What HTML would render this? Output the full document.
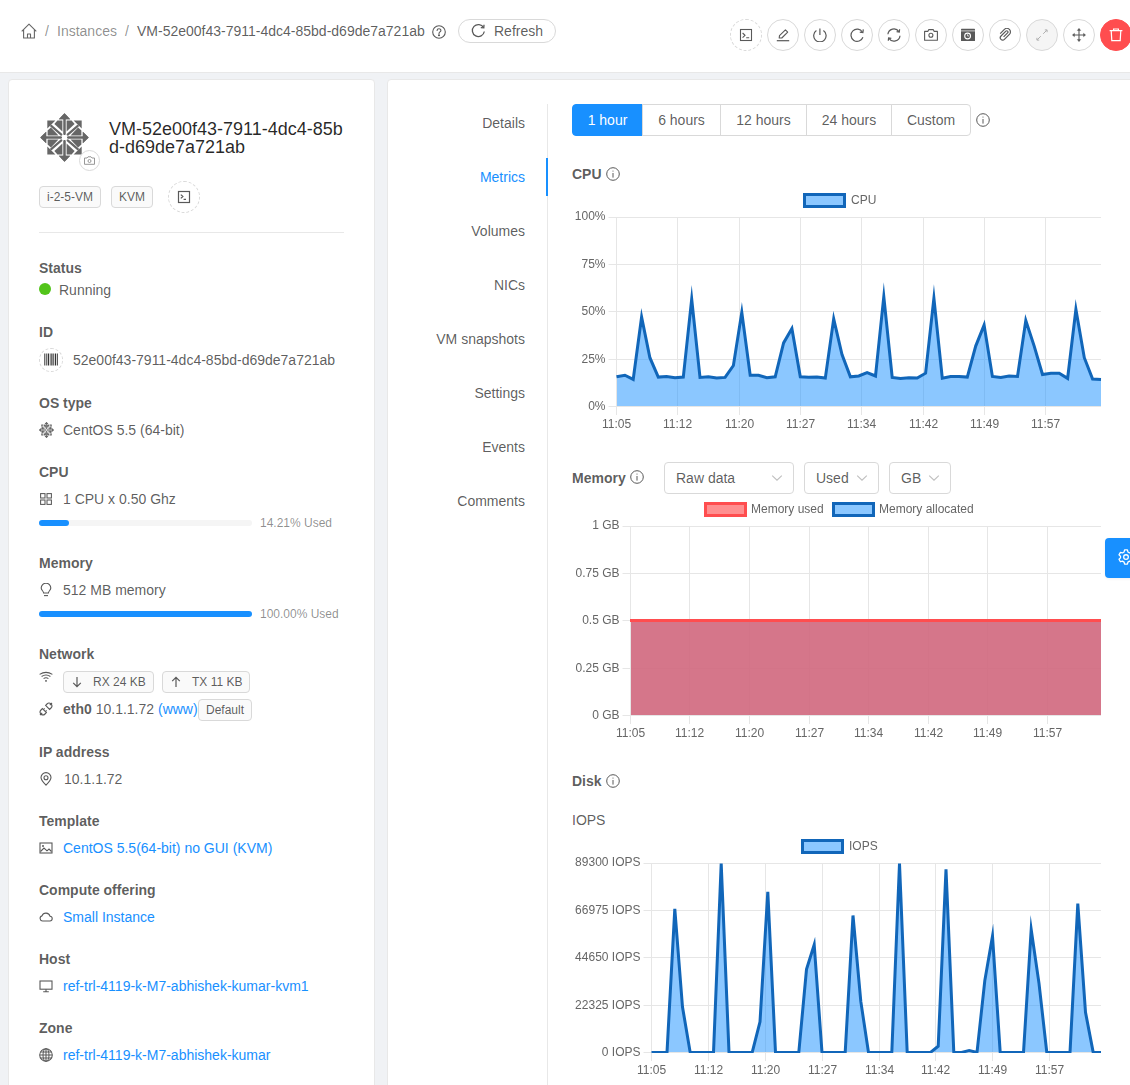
<!DOCTYPE html>
<html><head><meta charset="utf-8">
<style>
*{box-sizing:border-box;margin:0;padding:0}
html,body{width:1130px;height:1085px;overflow:hidden;background:#f0f2f5;font-family:"Liberation Sans",sans-serif;font-size:14px;color:rgba(0,0,0,0.65)}
.abs{position:absolute}
.t{position:absolute;white-space:nowrap;line-height:16px;font-size:14px}
.s{position:absolute;white-space:nowrap;line-height:14px;font-size:12px}
.b{font-weight:bold}
.lnk{color:#1890ff}
#hdr{position:absolute;left:0;top:0;width:1130px;height:73px;background:#fff;border-bottom:1px solid #e8e8e8}
.card{position:absolute;background:#fff;border:1px solid #e8e8e8;border-radius:4px}
.cb{position:absolute;width:32px;height:32px;border-radius:50%;border:1px solid #d9d9d9;background:#fff}
.cb svg{position:absolute;left:8px;top:8px}
.tag{position:absolute;height:22px;border:1px solid #d9d9d9;background:#fafafa;border-radius:4px;font-size:12px;line-height:20px;padding:0 7px;white-space:nowrap}
.ic{position:absolute}
.tab{position:absolute;right:0;white-space:nowrap;line-height:16px;font-size:14px;text-align:right}
.bg{position:absolute;height:32px;border:1px solid #d9d9d9;background:#fff;line-height:30px;text-align:center;white-space:nowrap}
.sel{position:absolute;height:32px;border:1px solid #d9d9d9;background:#fff;border-radius:4px;line-height:30px;padding-left:11px;white-space:nowrap}
.sel svg{position:absolute;top:11px}
</style></head><body>
<div id="hdr"></div>
<div class="card" style="left:8px;top:79px;width:367px;height:1100px"></div>
<div class="card" style="left:387px;top:79px;width:800px;height:1100px"></div>

<svg class="ic" style="left:21px;top:23px" width="16" height="16" viewBox="0 0 16 16" fill="none" stroke="#666" stroke-width="1.1" stroke-linejoin="round"><path d="M0.7 8.4 L8 1.2 L15.3 8.4 M2.6 6.6 V15 H13.4 V6.6 M6.5 15 V11 H9.5 V15"/></svg>
<div class="t" style="left:45px;top:23px;color:rgba(0,0,0,0.45)">/</div>
<div class="t" style="left:57px;top:23px;color:rgba(0,0,0,0.45)">Instances</div>
<div class="t" style="left:125px;top:23px;color:rgba(0,0,0,0.45)">/</div>
<div class="t" style="left:137px;top:23px">VM-52e00f43-7911-4dc4-85bd-d69de7a721ab</div>
<svg class="ic" style="left:432px;top:25px" width="14" height="14" viewBox="0 0 14 14" fill="none" stroke="#595959" stroke-width="1.1"><circle cx="7" cy="7" r="6.3"/><path d="M5.1 5.4 C5.1 3.2 8.9 3.2 8.9 5.4 C8.9 6.9 7 6.9 7 8.4" stroke-linecap="round"/><circle cx="7" cy="10.3" r="0.5" fill="#595959"/></svg>
<div class="abs" style="left:458px;top:19px;width:98px;height:24px;border:1px solid #d9d9d9;border-radius:12px;background:#fff"></div>
<svg class="ic" style="left:471px;top:23px" width="15" height="15" viewBox="0 0 15 15" fill="none" stroke="#595959" stroke-width="1.3"><path d="M12.6 4.6 A6 6 0 1 0 13.3 8.5"/><path d="M13 1.8 L12.8 4.9 L9.8 4.6" fill="none"/></svg>
<div class="t" style="left:494px;top:23px">Refresh</div>

<div class="cb" style="left:730px;top:19px;border-style:dashed"><svg width="14" height="14" viewBox="0 0 14 14" fill="none" stroke="#595959" stroke-width="1.1"><rect x="1.5" y="1.5" width="11" height="11"/><path d="M3.6 5 L6 7.3 L3.6 9.6 M7.2 9.8 H10.2"/></svg></div>
<div class="cb" style="left:767px;top:19px"><svg width="14" height="14" viewBox="0 0 14 14" fill="none" stroke="#595959" stroke-width="1.1"><path d="M0.8 12.7 H13.2" stroke-width="1.2"/><path d="M3.2 10 L3.5 7.6 L9.4 1.8 L11.7 4.1 L5.8 10 Z" stroke-linejoin="round"/></svg></div>
<div class="cb" style="left:804px;top:19px"><svg width="14" height="14" viewBox="0 0 14 14" fill="none" stroke="#595959" stroke-width="1.2"><path d="M10.4 2.6 A6.2 6.2 0 1 1 3.4 2.6"/><path d="M6.9 0.4 V7"/></svg></div>
<div class="cb" style="left:841px;top:19px"><svg width="14" height="14" viewBox="0 0 14 14" fill="none" stroke="#595959" stroke-width="1.2"><path d="M12.4 4.2 A6.1 6.1 0 1 0 12.9 9.2"/><path d="M13.3 1.4 L12.9 4.6 L9.8 4.1"/></svg></div>
<div class="cb" style="left:878px;top:19px"><svg width="14" height="14" viewBox="0 0 14 14" fill="none" stroke="#595959" stroke-width="1.2"><path d="M0.9 6.3 A6 6 0 0 1 11.9 3.6"/><path d="M13 7.7 A6 6 0 0 1 2 10.4"/><path d="M12.6 1.2 L12.3 4.1 L9.6 3.6 M1.3 12.8 L1.6 9.9 L4.3 10.4"/></svg></div>
<div class="cb" style="left:915px;top:19px"><svg width="14" height="14" viewBox="0 0 14 14" fill="none" stroke="#595959" stroke-width="1.1"><path d="M0.6 3.4 H3.8 L4.8 1.6 H9.2 L10.2 3.4 H13.4 V12.2 H0.6 Z" stroke-linejoin="round"/><circle cx="6.9" cy="7.3" r="2"/></svg></div>
<div class="cb" style="left:952px;top:19px"><svg width="14" height="14" viewBox="0 0 14 14"><rect x="0" y="0.8" width="14" height="12.2" rx="0.6" fill="#595959"/><path d="M0 2.9 H14" stroke="#fff" stroke-width="0.7"/><circle cx="6.6" cy="8" r="2.9" fill="none" stroke="#fff" stroke-width="1.1"/><path d="M6.6 6.2 V8 H8" stroke="#fff" stroke-width="0.7" fill="none"/></svg></div>
<div class="cb" style="left:989px;top:19px"><svg width="14" height="14" viewBox="0 0 14 14" fill="none" stroke="#595959" stroke-width="1.2"><path d="M5.6 8.8 L9.6 4.8 A1.2 1.2 0 0 0 7.9 3.1 L3 8 A2.4 2.4 0 0 0 6.4 11.4 L11.4 6.4 A3.5 3.5 0 0 0 6.4 1.4 L2.2 5.6"/></svg></div>
<div class="cb" style="left:1026px;top:19px;background:#f5f5f5"><svg width="14" height="14" viewBox="0 0 14 14" fill="none" stroke="#b0b0b0" stroke-width="1"><path d="M8.2 5.8 L11.8 2.2 M9.8 1.9 H12.1 V4.2 M5.8 8.2 L2.2 11.8 M1.9 9.8 V12.1 H4.2"/></svg></div>
<div class="cb" style="left:1063px;top:19px"><svg width="14" height="14" viewBox="0 0 14 14" fill="none" stroke="#595959" stroke-width="1.1"><path d="M7 0.8 V13.2 M0.8 7 H13.2"/><path d="M5.4 2.4 L7 0.6 L8.6 2.4 Z M5.4 11.6 L7 13.4 L8.6 11.6 Z M2.4 5.4 L0.6 7 L2.4 8.6 Z M11.6 5.4 L13.4 7 L11.6 8.6 Z" fill="#595959" stroke-width="0.6"/></svg></div>
<div class="cb" style="left:1100px;top:19px;background:#ff4d4f;border-color:#ff4d4f"><svg width="14" height="14" viewBox="0 0 14 14" fill="none" stroke="#fff" stroke-width="1.2"><path d="M0.6 2.6 H13.4 M4.6 2.6 V1 H9.4 V2.6 M2.2 2.6 L2.8 12.6 H11.2 L11.8 2.6"/></svg></div>

<!-- CentOS logo -->
<svg class="ic" style="left:40px;top:113px" width="49" height="49" viewBox="-24.5 -24.5 49 49" ><g fill="#666"><g>
  <polygon points="-17.2,-17.1 -9.1,-17.1 -17.2,-8.9"/>
  <polygon points="-7.1,-16.9 -2.1,-16.9 -2.1,-6.0 -10.1,-13.6"/>
  <polygon points="-16.9,-7.1 -16.9,-2.1 -6.0,-2.1 -13.6,-10.1"/>
  <path d="M-13.3 -11.6 L-3.2 -2.9" stroke="#666" stroke-width="2.2" stroke-linecap="round" fill="none"/>
  <path d="M-11.6 -13.3 L-2.9 -3.2" stroke="#666" stroke-width="0" fill="none"/>
  <path d="M0 -18.2 V-3.6 M-18.2 0 H-3.6" stroke="#666" stroke-width="2" stroke-linecap="round" fill="none"/>
  <polygon points="0,-24.2 -5.7,-18.3 5.7,-18.3"/>
  <polygon points="-24.2,0 -18.3,-5.7 -18.3,5.7"/>
 </g><g transform="scale(-1,1)">
  <polygon points="-17.2,-17.1 -9.1,-17.1 -17.2,-8.9"/>
  <polygon points="-7.1,-16.9 -2.1,-16.9 -2.1,-6.0 -10.1,-13.6"/>
  <polygon points="-16.9,-7.1 -16.9,-2.1 -6.0,-2.1 -13.6,-10.1"/>
  <path d="M-13.3 -11.6 L-3.2 -2.9" stroke="#666" stroke-width="2.2" stroke-linecap="round" fill="none"/>
  <path d="M-11.6 -13.3 L-2.9 -3.2" stroke="#666" stroke-width="0" fill="none"/>
  <path d="M0 -18.2 V-3.6 M-18.2 0 H-3.6" stroke="#666" stroke-width="2" stroke-linecap="round" fill="none"/>
  <polygon points="0,-24.2 -5.7,-18.3 5.7,-18.3"/>
  <polygon points="-24.2,0 -18.3,-5.7 -18.3,5.7"/>
 </g><g transform="scale(1,-1)">
  <polygon points="-17.2,-17.1 -9.1,-17.1 -17.2,-8.9"/>
  <polygon points="-7.1,-16.9 -2.1,-16.9 -2.1,-6.0 -10.1,-13.6"/>
  <polygon points="-16.9,-7.1 -16.9,-2.1 -6.0,-2.1 -13.6,-10.1"/>
  <path d="M-13.3 -11.6 L-3.2 -2.9" stroke="#666" stroke-width="2.2" stroke-linecap="round" fill="none"/>
  <path d="M-11.6 -13.3 L-2.9 -3.2" stroke="#666" stroke-width="0" fill="none"/>
  <path d="M0 -18.2 V-3.6 M-18.2 0 H-3.6" stroke="#666" stroke-width="2" stroke-linecap="round" fill="none"/>
  <polygon points="0,-24.2 -5.7,-18.3 5.7,-18.3"/>
  <polygon points="-24.2,0 -18.3,-5.7 -18.3,5.7"/>
 </g><g transform="scale(-1,-1)">
  <polygon points="-17.2,-17.1 -9.1,-17.1 -17.2,-8.9"/>
  <polygon points="-7.1,-16.9 -2.1,-16.9 -2.1,-6.0 -10.1,-13.6"/>
  <polygon points="-16.9,-7.1 -16.9,-2.1 -6.0,-2.1 -13.6,-10.1"/>
  <path d="M-13.3 -11.6 L-3.2 -2.9" stroke="#666" stroke-width="2.2" stroke-linecap="round" fill="none"/>
  <path d="M-11.6 -13.3 L-2.9 -3.2" stroke="#666" stroke-width="0" fill="none"/>
  <path d="M0 -18.2 V-3.6 M-18.2 0 H-3.6" stroke="#666" stroke-width="2" stroke-linecap="round" fill="none"/>
  <polygon points="0,-24.2 -5.7,-18.3 5.7,-18.3"/>
  <polygon points="-24.2,0 -18.3,-5.7 -18.3,5.7"/>
 </g></g></svg>
<div class="abs" style="left:79px;top:150px;width:21px;height:21px;border-radius:50%;border:1px solid #d9d9d9;background:#fff"></div>
<svg class="ic" style="left:83px;top:154px" width="13" height="13" viewBox="0 0 13 13" fill="none" stroke="#8c8c8c" stroke-width="0.9"><path d="M1.5 4 H4 L5 2.8 H8 L9 4 H11.5 V10.3 H1.5 Z"/><circle cx="6.5" cy="7" r="1.5"/></svg>
<div class="abs" style="left:109px;top:120px;font-size:18px;line-height:18px;color:rgba(0,0,0,0.85);white-space:nowrap">VM-52e00f43-7911-4dc4-85b<br>d-d69de7a721ab</div>

<div class="tag" style="left:39px;top:186px">i-2-5-VM</div>
<div class="tag" style="left:111px;top:186px">KVM</div>
<div class="abs" style="left:168px;top:181px;width:32px;height:32px;border-radius:50%;border:1px dashed #d9d9d9"></div>
<svg class="ic" style="left:177px;top:190px" width="14" height="14" viewBox="0 0 14 14" fill="none" stroke="#595959" stroke-width="1.2"><rect x="1.5" y="1.5" width="11" height="11"/><path d="M3.8 4.6 L5.9 6.5 L3.8 8.4 M6.6 9.4 H9"/></svg>
<div class="abs" style="left:39px;top:232px;width:305px;height:1px;background:#e8e8e8"></div>

<div class="t b" style="left:39px;top:260px">Status</div>
<div class="abs" style="left:39px;top:283px;width:12px;height:12px;border-radius:50%;background:#52c41a"></div>
<div class="t" style="left:59px;top:282px">Running</div>

<div class="t b" style="left:39px;top:324px">ID</div>
<div class="abs" style="left:39px;top:348px;width:24px;height:24px;border-radius:50%;border:1px dashed #d9d9d9"></div>
<svg class="ic" style="left:44px;top:353px" width="14" height="13" viewBox="0 0 14 13" fill="#333"><rect x="0.3" y="0.5" width="1" height="12"/><rect x="2.2" y="0.5" width="0.7" height="12"/><rect x="3.7" y="0.5" width="1.3" height="12"/><rect x="5.8" y="0.5" width="0.7" height="12"/><rect x="7.3" y="0.5" width="1.2" height="12"/><rect x="9.3" y="0.5" width="0.7" height="12"/><rect x="10.8" y="0.5" width="1.4" height="12"/><rect x="13" y="0.5" width="0.8" height="12"/></svg>
<div class="t" style="left:73px;top:352px">52e00f43-7911-4dc4-85bd-d69de7a721ab</div>

<div class="t b" style="left:39px;top:395px">OS type</div>
<svg class="ic" style="left:39px;top:422px" width="15" height="16" viewBox="-24.5 -24.5 49 49" preserveAspectRatio="none"><g fill="#666"><g>
  <polygon points="-17.2,-17.1 -9.1,-17.1 -17.2,-8.9"/>
  <polygon points="-7.1,-16.9 -2.1,-16.9 -2.1,-6.0 -10.1,-13.6"/>
  <polygon points="-16.9,-7.1 -16.9,-2.1 -6.0,-2.1 -13.6,-10.1"/>
  <path d="M-13.3 -11.6 L-3.2 -2.9" stroke="#666" stroke-width="2.2" stroke-linecap="round" fill="none"/>
  <path d="M-11.6 -13.3 L-2.9 -3.2" stroke="#666" stroke-width="0" fill="none"/>
  <path d="M0 -18.2 V-3.6 M-18.2 0 H-3.6" stroke="#666" stroke-width="2" stroke-linecap="round" fill="none"/>
  <polygon points="0,-24.2 -5.7,-18.3 5.7,-18.3"/>
  <polygon points="-24.2,0 -18.3,-5.7 -18.3,5.7"/>
 </g><g transform="scale(-1,1)">
  <polygon points="-17.2,-17.1 -9.1,-17.1 -17.2,-8.9"/>
  <polygon points="-7.1,-16.9 -2.1,-16.9 -2.1,-6.0 -10.1,-13.6"/>
  <polygon points="-16.9,-7.1 -16.9,-2.1 -6.0,-2.1 -13.6,-10.1"/>
  <path d="M-13.3 -11.6 L-3.2 -2.9" stroke="#666" stroke-width="2.2" stroke-linecap="round" fill="none"/>
  <path d="M-11.6 -13.3 L-2.9 -3.2" stroke="#666" stroke-width="0" fill="none"/>
  <path d="M0 -18.2 V-3.6 M-18.2 0 H-3.6" stroke="#666" stroke-width="2" stroke-linecap="round" fill="none"/>
  <polygon points="0,-24.2 -5.7,-18.3 5.7,-18.3"/>
  <polygon points="-24.2,0 -18.3,-5.7 -18.3,5.7"/>
 </g><g transform="scale(1,-1)">
  <polygon points="-17.2,-17.1 -9.1,-17.1 -17.2,-8.9"/>
  <polygon points="-7.1,-16.9 -2.1,-16.9 -2.1,-6.0 -10.1,-13.6"/>
  <polygon points="-16.9,-7.1 -16.9,-2.1 -6.0,-2.1 -13.6,-10.1"/>
  <path d="M-13.3 -11.6 L-3.2 -2.9" stroke="#666" stroke-width="2.2" stroke-linecap="round" fill="none"/>
  <path d="M-11.6 -13.3 L-2.9 -3.2" stroke="#666" stroke-width="0" fill="none"/>
  <path d="M0 -18.2 V-3.6 M-18.2 0 H-3.6" stroke="#666" stroke-width="2" stroke-linecap="round" fill="none"/>
  <polygon points="0,-24.2 -5.7,-18.3 5.7,-18.3"/>
  <polygon points="-24.2,0 -18.3,-5.7 -18.3,5.7"/>
 </g><g transform="scale(-1,-1)">
  <polygon points="-17.2,-17.1 -9.1,-17.1 -17.2,-8.9"/>
  <polygon points="-7.1,-16.9 -2.1,-16.9 -2.1,-6.0 -10.1,-13.6"/>
  <polygon points="-16.9,-7.1 -16.9,-2.1 -6.0,-2.1 -13.6,-10.1"/>
  <path d="M-13.3 -11.6 L-3.2 -2.9" stroke="#666" stroke-width="2.2" stroke-linecap="round" fill="none"/>
  <path d="M-11.6 -13.3 L-2.9 -3.2" stroke="#666" stroke-width="0" fill="none"/>
  <path d="M0 -18.2 V-3.6 M-18.2 0 H-3.6" stroke="#666" stroke-width="2" stroke-linecap="round" fill="none"/>
  <polygon points="0,-24.2 -5.7,-18.3 5.7,-18.3"/>
  <polygon points="-24.2,0 -18.3,-5.7 -18.3,5.7"/>
 </g></g></svg>
<div class="t" style="left:63px;top:422px">CentOS 5.5 (64-bit)</div>

<div class="t b" style="left:39px;top:464px">CPU</div>
<svg class="ic" style="left:40px;top:493px" width="12" height="12" viewBox="0 0 12 12" fill="none" stroke="#595959" stroke-width="1.05"><rect x="0.6" y="0.6" width="4.4" height="4.4"/><rect x="7" y="0.6" width="4.4" height="4.4"/><rect x="0.6" y="7" width="4.4" height="4.4"/><rect x="7" y="7" width="4.4" height="4.4"/></svg>
<div class="t" style="left:63px;top:491px">1 CPU x 0.50 Ghz</div>
<div class="abs" style="left:39px;top:520px;width:213px;height:6px;border-radius:3px;background:#f5f5f5"></div>
<div class="abs" style="left:39px;top:520px;width:30px;height:6px;border-radius:3px;background:#1890ff"></div>
<div class="s" style="left:260px;top:516px;color:rgba(0,0,0,0.45)">14.21% Used</div>

<div class="t b" style="left:39px;top:555px">Memory</div>
<svg class="ic" style="left:39px;top:583px" width="14" height="14" viewBox="0 0 14 14" fill="none" stroke="#595959" stroke-width="1.1"><path d="M4.6 10 C4.6 8 2.2 7.4 2.2 5 A4.8 4.8 0 0 1 11.8 5 C11.8 7.4 9.4 8 9.4 10 Z"/><path d="M5 12.6 H9"/></svg>
<div class="t" style="left:63px;top:582px">512 MB memory</div>
<div class="abs" style="left:39px;top:611px;width:213px;height:6px;border-radius:3px;background:#1890ff"></div>
<div class="s" style="left:260px;top:607px;color:rgba(0,0,0,0.45)">100.00% Used</div>

<div class="t b" style="left:39px;top:646px">Network</div>
<svg class="ic" style="left:39px;top:671px" width="14" height="11" viewBox="0 0 14 11" fill="none" stroke="#595959" stroke-width="1"><path stroke-width="1.1" d="M0.6 3.4 Q7 -0.6 13.4 3.4 M2.6 5.5 Q7 2.6 11.4 5.5 M4.6 7.6 Q7 5.8 9.4 7.6"/><rect x="6.2" y="9.1" width="1.6" height="1.6" fill="#595959" stroke="none"/></svg>
<div class="tag" style="left:63px;top:671px;width:91px;font-size:12px"></div>
<svg class="ic" style="left:72px;top:676px" width="10" height="12" viewBox="0 0 10 12" fill="none" stroke="#595959" stroke-width="1.2"><path d="M5 1 V10.5 M1.2 6.8 L5 10.6 L8.8 6.8"/></svg>
<div class="s" style="left:93px;top:675px">RX 24 KB</div>
<div class="tag" style="left:162px;top:671px;width:88px"></div>
<svg class="ic" style="left:171px;top:676px" width="10" height="12" viewBox="0 0 10 12" fill="none" stroke="#595959" stroke-width="1.2"><path d="M5 11 V1.5 M1.2 5.2 L5 1.4 L8.8 5.2"/></svg>
<div class="s" style="left:192px;top:675px">TX 11 KB</div>
<svg class="ic" style="left:39px;top:702px" width="14" height="14" viewBox="0 0 14 14" fill="none" stroke="#595959" stroke-width="1.1"><path d="M1 13 L3.2 10.8 M13 1 L10.8 3.2"/><path d="M3.4 6.6 L7.4 10.6 L6 12 A2.4 2.4 0 0 1 2 8 Z"/><path d="M6.6 3.4 L10.6 7.4 L12 6 A2.4 2.4 0 0 0 8 2 Z"/><path d="M5.6 6.4 L4.4 7.6 M7.6 8.4 L6.4 9.6"/></svg>
<div class="t" style="left:63px;top:701px"><span class="b" style="color:rgba(0,0,0,0.65)">eth0</span> 10.1.1.72 <span class="lnk">(www)</span></div>
<div class="tag" style="left:198px;top:699px;height:22px;line-height:20px">Default</div>

<div class="t b" style="left:39px;top:744px">IP address</div>
<svg class="ic" style="left:39px;top:772px" width="14" height="14" viewBox="0 0 14 14" fill="none" stroke="#595959" stroke-width="1.1"><path d="M7 13.2 C4 10.2 2 7.8 2 5.6 A5 5 0 0 1 12 5.6 C12 7.8 10 10.2 7 13.2 Z"/><circle cx="7" cy="5.8" r="2"/></svg>
<div class="t" style="left:64px;top:771px">10.1.1.72</div>

<div class="t b" style="left:39px;top:813px">Template</div>
<svg class="ic" style="left:39px;top:841px" width="14" height="14" viewBox="0 0 14 14" fill="none" stroke="#595959" stroke-width="1.1"><rect x="1" y="2" width="12" height="10"/><path d="M1.5 10.5 L5 7 L8 9.8 L10 8 L12.5 10.5"/><circle cx="4" cy="5" r="1" fill="#595959" stroke="none"/></svg>
<div class="t lnk" style="left:63px;top:840px">CentOS 5.5(64-bit) no GUI (KVM)</div>

<div class="t b" style="left:39px;top:882px">Compute offering</div>
<svg class="ic" style="left:39px;top:910px" width="14" height="14" viewBox="0 0 14 14" fill="none" stroke="#595959" stroke-width="1.1"><path d="M3.6 11 A2.6 2.6 0 0 1 3 5.9 A4.2 4.2 0 0 1 11 6.2 A2.4 2.4 0 0 1 10.6 11 Z"/></svg>
<div class="t lnk" style="left:63px;top:909px">Small Instance</div>

<div class="t b" style="left:39px;top:951px">Host</div>
<svg class="ic" style="left:39px;top:979px" width="14" height="14" viewBox="0 0 14 14" fill="none" stroke="#595959" stroke-width="1.1"><rect x="1" y="2" width="12" height="8.2"/><path d="M7 10.2 V12.6 M4.2 12.8 H9.8"/></svg>
<div class="t lnk" style="left:63px;top:978px">ref-trl-4119-k-M7-abhishek-kumar-kvm1</div>

<div class="t b" style="left:39px;top:1020px">Zone</div>
<svg class="ic" style="left:39px;top:1048px" width="14" height="14" viewBox="0 0 14 14" fill="none" stroke="#595959" stroke-width="1.05"><circle cx="7" cy="7" r="6.3"/><ellipse cx="7" cy="7" rx="3" ry="6.3"/><path d="M0.8 7 H13.2 M1.6 4 H12.4 M1.6 10 H12.4 M7 0.8 V13.2"/></svg>
<div class="t lnk" style="left:63px;top:1047px">ref-trl-4119-k-M7-abhishek-kumar</div>

<div class="abs" style="left:547px;top:104px;width:1px;height:1000px;background:#e8e8e8"></div>
<div class="abs" style="left:546px;top:158px;width:2px;height:38px;background:#1890ff"></div>
<div class="tab" style="left:0;width:525px;top:115px">Details</div>
<div class="tab" style="left:0;width:525px;top:169px;color:#1890ff">Metrics</div>
<div class="tab" style="left:0;width:525px;top:223px">Volumes</div>
<div class="tab" style="left:0;width:525px;top:277px">NICs</div>
<div class="tab" style="left:0;width:525px;top:331px">VM snapshots</div>
<div class="tab" style="left:0;width:525px;top:385px">Settings</div>
<div class="tab" style="left:0;width:525px;top:439px">Events</div>
<div class="tab" style="left:0;width:525px;top:493px">Comments</div>

<div class="bg" style="left:572px;top:104px;width:71px;background:#1890ff;border-color:#1890ff;color:#fff;border-radius:4px 0 0 4px">1 hour</div>
<div class="bg" style="left:642px;top:104px;width:79px;border-left:1px solid #d9d9d9">6 hours</div>
<div class="bg" style="left:720px;top:104px;width:87px">12 hours</div>
<div class="bg" style="left:806px;top:104px;width:86px">24 hours</div>
<div class="bg" style="left:891px;top:104px;width:80px;border-radius:0 4px 4px 0">Custom</div>
<svg class="ic" style="left:976px;top:113px" width="14" height="14" viewBox="0 0 14 14" fill="none" stroke="#595959" stroke-width="1"><circle cx="7" cy="7" r="6.3"/><path d="M7 6 V10.6"/><circle cx="7" cy="4" r="0.6" fill="#595959" stroke="none"/></svg>

<div class="t b" style="left:572px;top:166px">CPU</div>
<svg class="ic" style="left:606px;top:167px" width="14" height="14" viewBox="0 0 14 14" fill="none" stroke="#595959" stroke-width="1"><circle cx="7" cy="7" r="6.3"/><path d="M7 6 V10.6"/><circle cx="7" cy="4" r="0.6" fill="#595959" stroke="none"/></svg>
<div class="abs" style="left:803px;top:193px;width:43px;height:15px;background:rgba(24,144,255,0.5);border:3px solid #1166b9"></div>
<div class="s" style="left:851px;top:193px;color:#666;will-change:transform">CPU</div>

<div class="t b" style="left:572px;top:470px">Memory</div>
<svg class="ic" style="left:630px;top:470px" width="14" height="14" viewBox="0 0 14 14" fill="none" stroke="#595959" stroke-width="1"><circle cx="7" cy="7" r="6.3"/><path d="M7 6 V10.6"/><circle cx="7" cy="4" r="0.6" fill="#595959" stroke="none"/></svg>
<div class="sel" style="left:664px;top:462px;width:130px">Raw data<svg style="left:106px" width="12" height="8" viewBox="0 0 12 8" fill="none" stroke="#bfbfbf" stroke-width="1.1"><path d="M1.2 1.6 L6 6.2 L10.8 1.6"/></svg></div>
<div class="sel" style="left:804px;top:462px;width:75px">Used<svg style="left:51px" width="12" height="8" viewBox="0 0 12 8" fill="none" stroke="#bfbfbf" stroke-width="1.1"><path d="M1.2 1.6 L6 6.2 L10.8 1.6"/></svg></div>
<div class="sel" style="left:889px;top:462px;width:62px">GB<svg style="left:38px" width="12" height="8" viewBox="0 0 12 8" fill="none" stroke="#bfbfbf" stroke-width="1.1"><path d="M1.2 1.6 L6 6.2 L10.8 1.6"/></svg></div>
<div class="abs" style="left:704px;top:502px;width:43px;height:15px;background:#ff8f90;border:3px solid #ff4d4f"></div>
<div class="s" style="left:751px;top:502px;color:#666;will-change:transform">Memory used</div>
<div class="abs" style="left:832px;top:502px;width:43px;height:15px;background:rgba(24,144,255,0.5);border:3px solid #1166b9"></div>
<div class="s" style="left:879px;top:502px;color:#666;will-change:transform">Memory allocated</div>

<div class="t b" style="left:572px;top:773px">Disk</div>
<svg class="ic" style="left:606px;top:774px" width="14" height="14" viewBox="0 0 14 14" fill="none" stroke="#595959" stroke-width="1"><circle cx="7" cy="7" r="6.3"/><path d="M7 6 V10.6"/><circle cx="7" cy="4" r="0.6" fill="#595959" stroke="none"/></svg>
<div class="t" style="left:572px;top:812px">IOPS</div>
<div class="abs" style="left:801px;top:839px;width:43px;height:15px;background:rgba(24,144,255,0.5);border:3px solid #1166b9"></div>
<div class="s" style="left:849px;top:839px;color:#666;will-change:transform">IOPS</div>

<div class="abs" style="left:1105px;top:538px;width:40px;height:40px;background:#1890ff;border-radius:4px;box-shadow:0 1px 3px rgba(0,0,0,0.06)"></div>
<svg class="ic" style="left:1117px;top:548px" width="18" height="18" viewBox="0 0 20 20" fill="none" stroke="#fff" stroke-width="1.4"><path d="M8.4 2.2 H11.6 L12.1 4.4 L14 5.5 L16.2 4.8 L17.8 7.6 L16.1 9.2 V11.0 L17.8 12.5 L16.2 15.3 L14 14.6 L12.1 15.7 L11.6 17.9 H8.4 L7.9 15.7 L6 14.6 L3.8 15.3 L2.2 12.5 L3.9 11 V9.2 L2.2 7.6 L3.8 4.8 L6 5.5 L7.9 4.4 Z" stroke-linejoin="round"/><circle cx="10" cy="10.1" r="2.6"/></svg>

<svg class="abs" style="left:0;top:0;will-change:transform" width="1130" height="1085" viewBox="0 0 1130 1085"><g stroke="#e6e6e6" stroke-width="1"><line x1="608.5" y1="217.5" x2="1101" y2="217.5"/><line x1="608.5" y1="264.5" x2="1101" y2="264.5"/><line x1="608.5" y1="311.5" x2="1101" y2="311.5"/><line x1="608.5" y1="359.5" x2="1101" y2="359.5"/><line x1="608.5" y1="406.5" x2="1101" y2="406.5"/><line x1="616.5" y1="217" x2="616.5" y2="415"/><line x1="677.5" y1="217" x2="677.5" y2="415"/><line x1="739.5" y1="217" x2="739.5" y2="415"/><line x1="800.5" y1="217" x2="800.5" y2="415"/><line x1="861.5" y1="217" x2="861.5" y2="415"/><line x1="923.5" y1="217" x2="923.5" y2="415"/><line x1="984.5" y1="217" x2="984.5" y2="415"/><line x1="1045.5" y1="217" x2="1045.5" y2="415"/></g><polygon fill="rgba(24,144,255,0.5)" points="617,406 617.0,376.8 624.9,375.2 633.2,379.4 641.6,317.0 649.9,357.7 658.3,377.1 666.6,376.5 675.0,377.7 683.3,377.1 691.7,299.1 700.0,377.4 708.4,376.8 716.7,378.1 725.1,377.4 733.4,365.5 741.8,312.3 750.2,375.2 758.5,375.2 766.9,377.7 775.2,376.8 783.6,342.9 791.9,328.6 800.3,376.8 808.6,377.3 817.0,377.0 825.3,378.1 833.7,318.9 842.0,354.5 850.4,376.8 858.8,376.0 867.1,372.6 875.5,376.0 883.8,296.6 892.2,377.4 900.5,378.4 908.9,377.7 917.2,378.1 925.6,373.2 933.9,298.2 942.3,378.1 950.6,376.5 959.0,376.5 967.3,377.1 975.7,346.1 984.1,325.1 992.4,376.5 1000.8,377.4 1009.1,376.1 1017.5,376.5 1025.8,320.5 1034.2,346.1 1042.5,374.5 1050.9,373.2 1059.2,373.2 1067.6,378.4 1075.9,309.3 1084.3,357.7 1092.6,379.0 1101.0,379.4 1101,406"/><polyline fill="none" stroke="#1166b9" stroke-width="3" stroke-linejoin="miter" stroke-miterlimit="10" points="616.5,376.8 624.9,375.2 633.2,379.4 641.6,317.0 649.9,357.7 658.3,377.1 666.6,376.5 675.0,377.7 683.3,377.1 691.7,299.1 700.0,377.4 708.4,376.8 716.7,378.1 725.1,377.4 733.4,365.5 741.8,312.3 750.2,375.2 758.5,375.2 766.9,377.7 775.2,376.8 783.6,342.9 791.9,328.6 800.3,376.8 808.6,377.3 817.0,377.0 825.3,378.1 833.7,318.9 842.0,354.5 850.4,376.8 858.8,376.0 867.1,372.6 875.5,376.0 883.8,296.6 892.2,377.4 900.5,378.4 908.9,377.7 917.2,378.1 925.6,373.2 933.9,298.2 942.3,378.1 950.6,376.5 959.0,376.5 967.3,377.1 975.7,346.1 984.1,325.1 992.4,376.5 1000.8,377.4 1009.1,376.1 1017.5,376.5 1025.8,320.5 1034.2,346.1 1042.5,374.5 1050.9,373.2 1059.2,373.2 1067.6,378.4 1075.9,309.3 1084.3,357.7 1092.6,379.0 1101.0,379.4"/><g fill="#666" font-size="12" font-family="Liberation Sans, sans-serif"><text x="605.5" y="219.70" text-anchor="end">100%</text><text x="605.5" y="267.70" text-anchor="end">75%</text><text x="605.5" y="314.70" text-anchor="end">50%</text><text x="605.5" y="362.70" text-anchor="end">25%</text><text x="605.5" y="409.70" text-anchor="end">0%</text><text x="616.5" y="428" text-anchor="middle">11:05</text><text x="677.5" y="428" text-anchor="middle">11:12</text><text x="739.5" y="428" text-anchor="middle">11:20</text><text x="800.5" y="428" text-anchor="middle">11:27</text><text x="861.5" y="428" text-anchor="middle">11:34</text><text x="923.5" y="428" text-anchor="middle">11:42</text><text x="984.5" y="428" text-anchor="middle">11:49</text><text x="1045.5" y="428" text-anchor="middle">11:57</text></g><g stroke="#e6e6e6" stroke-width="1"><line x1="622.5" y1="526.5" x2="1101" y2="526.5"/><line x1="622.5" y1="573.5" x2="1101" y2="573.5"/><line x1="622.5" y1="620.5" x2="1101" y2="620.5"/><line x1="622.5" y1="668.5" x2="1101" y2="668.5"/><line x1="622.5" y1="715.5" x2="1101" y2="715.5"/><line x1="630.5" y1="526" x2="630.5" y2="724"/><line x1="689.5" y1="526" x2="689.5" y2="724"/><line x1="749.5" y1="526" x2="749.5" y2="724"/><line x1="809.5" y1="526" x2="809.5" y2="724"/><line x1="868.5" y1="526" x2="868.5" y2="724"/><line x1="928.5" y1="526" x2="928.5" y2="724"/><line x1="987.5" y1="526" x2="987.5" y2="724"/><line x1="1047.5" y1="526" x2="1047.5" y2="724"/></g><rect x="631" y="620.5" width="470" height="94.5" fill="rgb(208,103,125)" fill-opacity="0.9"/><line x1="630.0" y1="620.5" x2="1101" y2="620.5" stroke="#ff4d4f" stroke-width="3"/><g fill="#666" font-size="12" font-family="Liberation Sans, sans-serif"><text x="619.5" y="528.70" text-anchor="end">1 GB</text><text x="619.5" y="576.70" text-anchor="end">0.75 GB</text><text x="619.5" y="623.70" text-anchor="end">0.5 GB</text><text x="619.5" y="671.70" text-anchor="end">0.25 GB</text><text x="619.5" y="718.70" text-anchor="end">0 GB</text><text x="630.5" y="737" text-anchor="middle">11:05</text><text x="689.5" y="737" text-anchor="middle">11:12</text><text x="749.5" y="737" text-anchor="middle">11:20</text><text x="809.5" y="737" text-anchor="middle">11:27</text><text x="868.5" y="737" text-anchor="middle">11:34</text><text x="928.5" y="737" text-anchor="middle">11:42</text><text x="987.5" y="737" text-anchor="middle">11:49</text><text x="1047.5" y="737" text-anchor="middle">11:57</text></g><g stroke="#e6e6e6" stroke-width="1"><line x1="643.5" y1="863.5" x2="1101" y2="863.5"/><line x1="643.5" y1="910.5" x2="1101" y2="910.5"/><line x1="643.5" y1="957.5" x2="1101" y2="957.5"/><line x1="643.5" y1="1005.5" x2="1101" y2="1005.5"/><line x1="643.5" y1="1052.5" x2="1101" y2="1052.5"/><line x1="651.5" y1="863" x2="651.5" y2="1061"/><line x1="708.5" y1="863" x2="708.5" y2="1061"/><line x1="765.5" y1="863" x2="765.5" y2="1061"/><line x1="822.5" y1="863" x2="822.5" y2="1061"/><line x1="879.5" y1="863" x2="879.5" y2="1061"/><line x1="935.5" y1="863" x2="935.5" y2="1061"/><line x1="992.5" y1="863" x2="992.5" y2="1061"/><line x1="1049.5" y1="863" x2="1049.5" y2="1061"/></g><clipPath id="dclip"><rect x="640" y="862.6" width="470" height="190.3"/></clipPath><g clip-path="url(#dclip)"><polygon fill="rgba(24,144,255,0.5)" points="652,1052 652.0,1052.0 659.2,1052.0 667.0,1052.0 674.8,908.8 682.5,1007.0 690.2,1052.0 698.0,1052.0 705.8,1052.0 713.5,1052.0 721.2,863.5 729.0,1052.0 736.8,1052.0 744.5,1052.0 752.2,1052.0 760.0,1021.8 767.8,891.8 775.5,1052.0 783.2,1052.0 791.0,1052.0 798.8,1052.0 806.5,969.3 814.2,944.7 822.0,1052.0 829.8,1052.0 837.5,1052.0 845.2,1052.0 853.0,915.5 860.8,1001.4 868.5,1052.0 876.2,1052.0 884.0,1052.0 891.8,1052.0 899.5,863.5 907.2,1052.0 915.0,1052.0 922.8,1052.0 930.5,1052.0 938.2,1046.3 946.0,869.2 953.8,1052.0 961.5,1052.0 969.2,1050.5 977.0,1052.0 984.8,980.6 992.5,936.2 1000.2,1052.0 1008.0,1052.0 1015.8,1052.0 1023.5,1052.0 1031.2,929.6 1039.0,983.4 1046.8,1052.0 1054.5,1052.0 1062.2,1052.0 1070.0,1052.0 1077.8,903.7 1085.5,1012.3 1093.2,1052.0 1101.0,1052.0 1101,1052"/><polyline fill="none" stroke="#1166b9" stroke-width="3" stroke-linejoin="miter" stroke-miterlimit="10" points="651.5,1052.4 659.2,1052.4 667.0,1052.4 674.8,908.8 682.5,1007.0 690.2,1052.4 698.0,1052.4 705.8,1052.4 713.5,1052.4 721.2,863.5 729.0,1052.4 736.8,1052.4 744.5,1052.4 752.2,1052.4 760.0,1021.8 767.8,891.8 775.5,1052.4 783.2,1052.4 791.0,1052.4 798.8,1052.4 806.5,969.3 814.2,944.7 822.0,1052.4 829.8,1052.4 837.5,1052.4 845.2,1052.4 853.0,915.5 860.8,1001.4 868.5,1052.4 876.2,1052.4 884.0,1052.4 891.8,1052.4 899.5,863.5 907.2,1052.4 915.0,1052.4 922.8,1052.4 930.5,1052.4 938.2,1046.3 946.0,869.2 953.8,1052.4 961.5,1052.4 969.2,1050.5 977.0,1052.4 984.8,980.6 992.5,936.2 1000.2,1052.4 1008.0,1052.4 1015.8,1052.4 1023.5,1052.4 1031.2,929.6 1039.0,983.4 1046.8,1052.4 1054.5,1052.4 1062.2,1052.4 1070.0,1052.4 1077.8,903.7 1085.5,1012.3 1093.2,1052.4 1101.0,1052.4"/></g><g fill="#666" font-size="12" font-family="Liberation Sans, sans-serif"><text x="640.5" y="865.70" text-anchor="end">89300 IOPS</text><text x="640.5" y="913.70" text-anchor="end">66975 IOPS</text><text x="640.5" y="960.70" text-anchor="end">44650 IOPS</text><text x="640.5" y="1008.70" text-anchor="end">22325 IOPS</text><text x="640.5" y="1055.70" text-anchor="end">0 IOPS</text><text x="651.5" y="1074" text-anchor="middle">11:05</text><text x="708.5" y="1074" text-anchor="middle">11:12</text><text x="765.5" y="1074" text-anchor="middle">11:20</text><text x="822.5" y="1074" text-anchor="middle">11:27</text><text x="879.5" y="1074" text-anchor="middle">11:34</text><text x="935.5" y="1074" text-anchor="middle">11:42</text><text x="992.5" y="1074" text-anchor="middle">11:49</text><text x="1049.5" y="1074" text-anchor="middle">11:57</text></g></svg>
</body></html>
